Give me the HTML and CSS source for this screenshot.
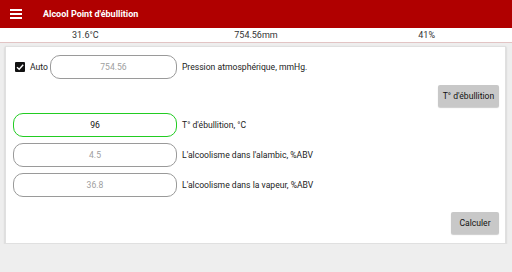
FILE: index.html
```html
<!DOCTYPE html>
<html lang="fr">
<head>
  <meta charset="UTF-8" />
  <title>Alcool Point d'ébullition</title>
  <link rel="stylesheet" href="styles.css">
</head>
<body>
  <div class="appbar">
    <svg class="menu" width="12" height="10" viewBox="0 0 12 10">
      <rect x="0" y="0" width="12" height="2" fill="#fff"/>
      <rect x="0" y="4" width="12" height="2" fill="#fff"/>
      <rect x="0" y="8" width="12" height="2" fill="#fff"/>
    </svg>
    <div class="title">Alcool Point d'ébullition</div>
  </div>

  <div class="weather">
    <div>31.6°C</div>
    <div>754.56mm</div>
    <div>41%</div>
  </div>

  <div class="card">
    <div class="row">
      <span class="check">
        <svg width="10" height="10" viewBox="0 0 10 10">
          <rect width="10" height="10" rx="1" fill="#111"/>
          <path d="M2 5.2 L4.2 7.3 L8.2 2.8" stroke="#fff" stroke-width="1.4" fill="none"/>
        </svg>
      </span>
      <span class="auto">Auto</span>
      <div class="field small muted">754.56</div>
      <span class="label">Pression atmosphérique, mmHg.</span>
    </div>

    <div class="actions">
      <button class="button boil">T° d'ébullition</button>
    </div>

    <div class="row">
      <div class="field focus">96</div>
      <span class="label">T° d'ébullition, °C</span>
    </div>
    <div class="row">
      <div class="field muted">4.5</div>
      <span class="label">L'alcoolisme dans l'alambic, %ABV</span>
    </div>
    <div class="row">
      <div class="field muted">36.8</div>
      <span class="label">L'alcoolisme dans la vapeur, %ABV</span>
    </div>

    <div class="actions bottom">
      <button class="button calc">Calculer</button>
    </div>
  </div>
</body>
</html>
```

FILE: styles.css
```css
body {
  margin: 0;
  background: #eeeeee;
  font-family: Roboto, "Liberation Sans", sans-serif;
  font-size: 8.6px;
  color: #222;
}
.appbar {
  height: 28px;
  background: #b00000;
  display: flex;
  align-items: center;
  padding-left: 10px;
}
.menu {
  display: block;
}
.title {
  color: #fff;
  font-weight: bold;
  font-size: 9px;
  margin-left: 21px;
}
.weather {
  height: 14px;
  font-size: 9px;
  background: #fff;
  border-bottom: 1px solid #e2c4c4;
  display: grid;
  grid-template-columns: 1fr 1fr 1fr;
  align-items: center;
  text-align: center;
  color: #333;
}
.card {
  margin: 3px 5px 0 5px;
  width: 501px;
  box-sizing: border-box;
  height: 198px;
  background: #fff;
  border: 1px solid #e0e0e0;
  box-shadow: 0 1px 2px rgba(0, 0, 0, 0.2);
  padding: 8px 6px 0 7px;
}
.row {
  display: flex;
  align-items: center;
  height: 24px;
  margin-bottom: 6px;
}
.row:first-child {
  margin-bottom: 0;
}
.check {
  display: flex;
  margin-left: 2px;
  margin-right: 5px;
}
.auto {
  margin-right: 2px;
}
.field {
  width: 164px;
  height: 24px;
  box-sizing: border-box;
  border: 1px solid #9a9a9a;
  border-radius: 10px;
  display: flex;
  align-items: center;
  justify-content: center;
  color: #111;
  flex-shrink: 0;
}
.field.small {
  width: 127px;
}
.field.muted {
  color: #a0a0a0;
}
.field.focus {
  border: 1px solid #22cc22;
}
.label {
  margin-left: 5px;
}
.actions {
  display: flex;
  justify-content: flex-end;
  margin-top: 6px;
  height: 22px;
  margin-bottom: 6px;
}
.actions.bottom {
  margin-top: 15px;
}
.button {
  background: #c8c8c8;
  border: none;
  border-radius: 2px;
  box-shadow: 0 1px 1px rgba(0, 0, 0, 0.2);
  font-family: Roboto, "Liberation Sans", sans-serif;
  font-weight: normal;
  font-size: 8.6px;
  color: #111;
  padding: 0;
  height: 22px;
  cursor: pointer;
}
.boil {
  width: 61px;
}
.calc {
  width: 48px;
}
```
